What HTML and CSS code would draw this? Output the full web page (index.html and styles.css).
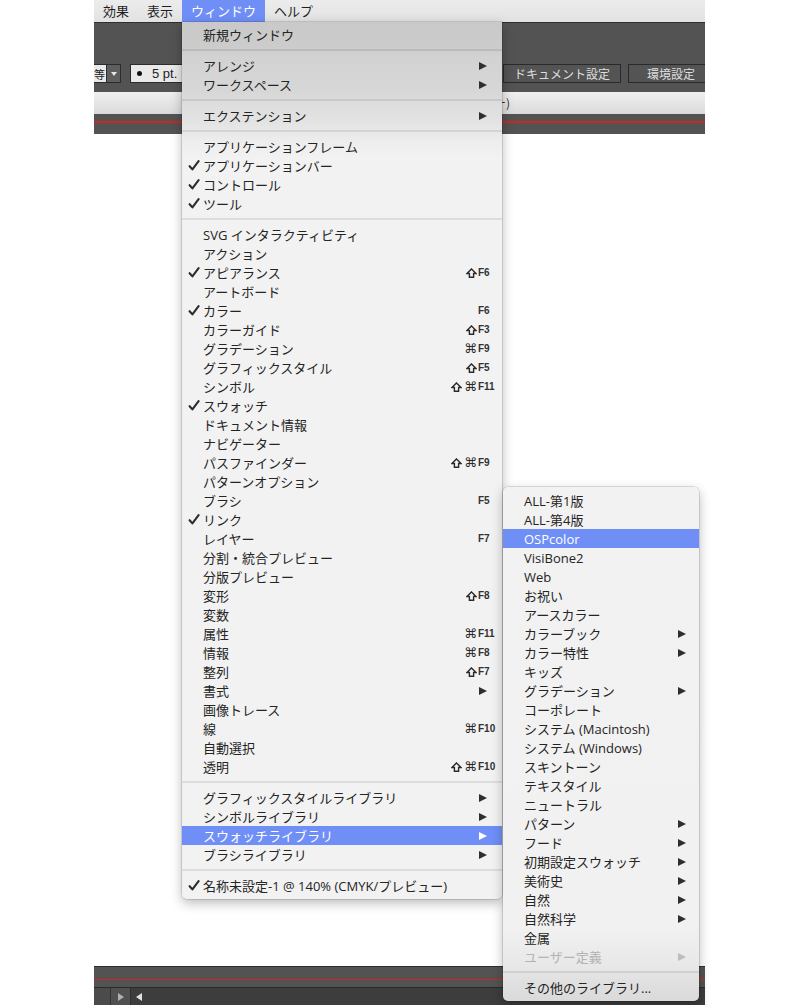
FILE: index.html
```html
<!DOCTYPE html>
<html lang="ja">
<head>
<meta charset="utf-8">
<title>ウィンドウ メニュー</title>
<link rel="stylesheet" href="styles.css">
</head>
<body>
<div class="screen">
  <div class="app">
    <div class="menubar">
      <span class="mb-item">効果</span>
      <span class="mb-item">表示</span>
      <span class="mb-item active">ウィンドウ</span>
      <span class="mb-item">ヘルプ</span>
    </div>
    <div class="toolbar">
      <div class="tb-top"></div>
      <div class="tb-controls">
        <div class="ctl-left">
          <div class="field cut"><span class="cut-txt">等</span></div>
          <div class="dd-btn"><i class="dd-tri"></i></div>
          <div class="field stroke"><span class="dot"></span><span class="pt">5 pt.</span></div>
        </div>
        <div class="ctl-right">
          <div class="btn b1">ドキュメント設定</div>
          <div class="btn b2">環境設定</div>
        </div>
      </div>
      <div class="tabbar"><span class="tab-tail">ュー)</span></div>
      <div class="tb-bottom"><div class="redline"></div></div>
    </div>
    <div class="canvas"></div>
    <div class="statusbar">
      <div class="sb-top"><div class="redline thin"></div></div>
      <div class="scrollrow">
        <div class="sr-box"></div>
        <div class="sr-btn"><i class="tri-r"></i></div>
        <div class="sr-track"><i class="tri-l"></i></div>
      </div>
    </div>
  </div>

  <div class="menu main-menu">
    <div class="item">新規ウィンドウ</div>
    <div class="sep"></div>
    <div class="item">アレンジ<i class="arr"></i></div>
    <div class="item">ワークスペース<i class="arr"></i></div>
    <div class="sep"></div>
    <div class="item">エクステンション<i class="arr"></i></div>
    <div class="sep"></div>
    <div class="item">アプリケーションフレーム</div>
    <div class="item"><svg class="ck" viewBox="0 0 12 11"><path d="M1.6 6.2 L4.4 9.4 L10.6 1.2"/></svg>アプリケーションバー</div>
    <div class="item"><svg class="ck" viewBox="0 0 12 11"><path d="M1.6 6.2 L4.4 9.4 L10.6 1.2"/></svg>コントロール</div>
    <div class="item"><svg class="ck" viewBox="0 0 12 11"><path d="M1.6 6.2 L4.4 9.4 L10.6 1.2"/></svg>ツール</div>
    <div class="sep"></div>
    <div class="item">SVG インタラクティビティ</div>
    <div class="item">アクション</div>
    <div class="item"><svg class="ck" viewBox="0 0 12 11"><path d="M1.6 6.2 L4.4 9.4 L10.6 1.2"/></svg>アピアランス<span class="sc"><span class="mods"><svg class="shift" viewBox="0 0 11 10"><path d="M5.5 0.9 L10.1 5.5 L7.6 5.5 L7.6 9.3 L3.4 9.3 L3.4 5.5 L0.9 5.5 Z"/></svg></span><span class="key">F6</span></span></div>
    <div class="item">アートボード</div>
    <div class="item"><svg class="ck" viewBox="0 0 12 11"><path d="M1.6 6.2 L4.4 9.4 L10.6 1.2"/></svg>カラー<span class="sc"><span class="mods"></span><span class="key">F6</span></span></div>
    <div class="item">カラーガイド<span class="sc"><span class="mods"><svg class="shift" viewBox="0 0 11 10"><path d="M5.5 0.9 L10.1 5.5 L7.6 5.5 L7.6 9.3 L3.4 9.3 L3.4 5.5 L0.9 5.5 Z"/></svg></span><span class="key">F3</span></span></div>
    <div class="item">グラデーション<span class="sc"><span class="mods"><span class="cmd">⌘</span></span><span class="key">F9</span></span></div>
    <div class="item">グラフィックスタイル<span class="sc"><span class="mods"><svg class="shift" viewBox="0 0 11 10"><path d="M5.5 0.9 L10.1 5.5 L7.6 5.5 L7.6 9.3 L3.4 9.3 L3.4 5.5 L0.9 5.5 Z"/></svg></span><span class="key">F5</span></span></div>
    <div class="item">シンボル<span class="sc"><span class="mods"><svg class="shift" viewBox="0 0 11 10"><path d="M5.5 0.9 L10.1 5.5 L7.6 5.5 L7.6 9.3 L3.4 9.3 L3.4 5.5 L0.9 5.5 Z"/></svg><span class="cmd">⌘</span></span><span class="key">F11</span></span></div>
    <div class="item"><svg class="ck" viewBox="0 0 12 11"><path d="M1.6 6.2 L4.4 9.4 L10.6 1.2"/></svg>スウォッチ</div>
    <div class="item">ドキュメント情報</div>
    <div class="item">ナビゲーター</div>
    <div class="item">パスファインダー<span class="sc"><span class="mods"><svg class="shift" viewBox="0 0 11 10"><path d="M5.5 0.9 L10.1 5.5 L7.6 5.5 L7.6 9.3 L3.4 9.3 L3.4 5.5 L0.9 5.5 Z"/></svg><span class="cmd">⌘</span></span><span class="key">F9</span></span></div>
    <div class="item">パターンオプション</div>
    <div class="item">ブラシ<span class="sc"><span class="mods"></span><span class="key">F5</span></span></div>
    <div class="item"><svg class="ck" viewBox="0 0 12 11"><path d="M1.6 6.2 L4.4 9.4 L10.6 1.2"/></svg>リンク</div>
    <div class="item">レイヤー<span class="sc"><span class="mods"></span><span class="key">F7</span></span></div>
    <div class="item">分割・統合プレビュー</div>
    <div class="item">分版プレビュー</div>
    <div class="item">変形<span class="sc"><span class="mods"><svg class="shift" viewBox="0 0 11 10"><path d="M5.5 0.9 L10.1 5.5 L7.6 5.5 L7.6 9.3 L3.4 9.3 L3.4 5.5 L0.9 5.5 Z"/></svg></span><span class="key">F8</span></span></div>
    <div class="item">変数</div>
    <div class="item">属性<span class="sc"><span class="mods"><span class="cmd">⌘</span></span><span class="key">F11</span></span></div>
    <div class="item">情報<span class="sc"><span class="mods"><span class="cmd">⌘</span></span><span class="key">F8</span></span></div>
    <div class="item">整列<span class="sc"><span class="mods"><svg class="shift" viewBox="0 0 11 10"><path d="M5.5 0.9 L10.1 5.5 L7.6 5.5 L7.6 9.3 L3.4 9.3 L3.4 5.5 L0.9 5.5 Z"/></svg></span><span class="key">F7</span></span></div>
    <div class="item">書式<i class="arr"></i></div>
    <div class="item">画像トレース</div>
    <div class="item">線<span class="sc"><span class="mods"><span class="cmd">⌘</span></span><span class="key">F10</span></span></div>
    <div class="item">自動選択</div>
    <div class="item">透明<span class="sc"><span class="mods"><svg class="shift" viewBox="0 0 11 10"><path d="M5.5 0.9 L10.1 5.5 L7.6 5.5 L7.6 9.3 L3.4 9.3 L3.4 5.5 L0.9 5.5 Z"/></svg><span class="cmd">⌘</span></span><span class="key">F10</span></span></div>
    <div class="sep"></div>
    <div class="item">グラフィックスタイルライブラリ<i class="arr"></i></div>
    <div class="item">シンボルライブラリ<i class="arr"></i></div>
    <div class="item hl">スウォッチライブラリ<i class="arr"></i></div>
    <div class="item">ブラシライブラリ<i class="arr"></i></div>
    <div class="sep"></div>
    <div class="item"><svg class="ck" viewBox="0 0 12 11"><path d="M1.6 6.2 L4.4 9.4 L10.6 1.2"/></svg>名称未設定-1 @ 140% (CMYK/プレビュー)</div>
  </div>

  <div class="menu sub-menu">
    <div class="item">ALL-第1版</div>
    <div class="item">ALL-第4版</div>
    <div class="item hl">OSPcolor</div>
    <div class="item">VisiBone2</div>
    <div class="item">Web</div>
    <div class="item">お祝い</div>
    <div class="item">アースカラー</div>
    <div class="item">カラーブック<i class="arr"></i></div>
    <div class="item">カラー特性<i class="arr"></i></div>
    <div class="item">キッズ</div>
    <div class="item">グラデーション<i class="arr"></i></div>
    <div class="item">コーポレート</div>
    <div class="item">システム (Macintosh)</div>
    <div class="item">システム (Windows)</div>
    <div class="item">スキントーン</div>
    <div class="item">テキスタイル</div>
    <div class="item">ニュートラル</div>
    <div class="item">パターン<i class="arr"></i></div>
    <div class="item">フード<i class="arr"></i></div>
    <div class="item">初期設定スウォッチ<i class="arr"></i></div>
    <div class="item">美術史<i class="arr"></i></div>
    <div class="item">自然<i class="arr"></i></div>
    <div class="item">自然科学<i class="arr"></i></div>
    <div class="item">金属</div>
    <div class="item dis">ユーザー定義<i class="arr"></i></div>
    <div class="sep"></div>
    <div class="item">その他のライブラリ...</div>
  </div>
</div>
</body>
</html>
```

FILE: styles.css
```css
* { box-sizing: border-box; }
html, body { margin: 0; padding: 0; background: #fff; }
body {
  width: 800px;
  height: 1005px;
  overflow: hidden;
  font-family: "Noto Sans CJK JP", sans-serif;
}
.screen {
  position: relative;
  width: 800px;
  height: 1005px;
  background: #fff;
}
.app {
  margin-left: 94px;
  width: 611px;
  height: 1005px;
  display: flex;
  flex-direction: column;
  overflow: hidden;
}

/* menu bar */
.menubar {
  height: 22px;
  flex: none;
  background: linear-gradient(#ececec, #e2e2e2);
  display: flex;
  font-size: 13px;
  color: #1e1e1e;
}
.mb-item { padding: 0 9px; line-height: 22px; white-space: nowrap; }
.mb-item.active { background: #6f8ff7; color: #fff; }

/* toolbar */
.toolbar {
  height: 112px;
  flex: none;
  background: #535353;
  display: flex;
  flex-direction: column;
}
.tb-top { height: 38px; flex: none; border-top: 1px solid #2f2f2f; }
.tb-controls {
  height: 32px;
  flex: none;
  display: flex;
  align-items: flex-start;
  padding-top: 4px;
}
.ctl-left { display: flex; }
.field {
  height: 19px;
  background: #e9e9e9;
  border: 1px solid #2c2c2c;
  display: flex;
  align-items: center;
  color: #222;
  flex: none;
}
.field.cut {
  width: 13px;
  border-left: none;
  justify-content: flex-end;
  font-size: 11px;
}
.cut-txt { flex: none; padding-right: 1px; }
.dd-btn {
  width: 14px;
  height: 19px;
  flex: none;
  background: #5e5e5e;
  border: 1px solid #2c2c2c;
  border-left: none;
  display: flex;
  align-items: center;
  justify-content: center;
}
.dd-tri {
  width: 0; height: 0;
  border-top: 4px solid #e6e6e6;
  border-left: 3px solid transparent;
  border-right: 3px solid transparent;
}
.field.stroke {
  margin-left: 9px;
  width: 80px;
  padding-left: 6px;
  font-family: "Liberation Sans", sans-serif;
  font-size: 13px;
}
.dot { width: 5px; height: 5px; border-radius: 50%; background: #111; flex: none; }
.pt { margin-left: 10px; }
.ctl-right {
  margin-left: auto;
  width: 202px;
  flex: none;
  display: flex;
  gap: 7px;
}
.btn {
  height: 19px;
  flex: none;
  border: 1px solid #2a2a2a;
  background: #545454;
  color: #dedede;
  font-size: 12px;
  display: flex;
  align-items: center;
  justify-content: center;
}
.btn.b1 { width: 118px; }
.btn.b2 { width: 86px; }
.tabbar {
  height: 22px;
  flex: none;
  background: linear-gradient(#f0f0f0, #dadada);
  padding-left: 388px;
  font-size: 12px;
  line-height: 22px;
  color: #333;
}
.tab-tail { white-space: nowrap; }
.tb-bottom { height: 20px; flex: none; padding-top: 7px; }
.redline { height: 2px; background: #c62a22; }
.redline.thin { height: 1px; background: #d0261e; }

.canvas { flex: 1; background: #fff; }

.statusbar { height: 39px; flex: none; background: #535353; display: flex; flex-direction: column; }
.sb-top { height: 21px; flex: none; border-top: 1px solid #2e2e2e; padding-top: 12px; }
.scrollrow {
  height: 18px;
  flex: none;
  border-top: 1px solid #2b2b2b;
  display: flex;
}
.sr-box { width: 17px; background: #4b4b4b; border-right: 1px solid #333; }
.sr-btn {
  width: 20px;
  background: #505050;
  border-right: 1px solid #2f2f2f;
  display: flex;
  align-items: center;
  justify-content: center;
}
.tri-r {
  width: 0; height: 0;
  border-left: 6px solid #b0b0b0;
  border-top: 4px solid transparent;
  border-bottom: 4px solid transparent;
}
.sr-track {
  flex: 1;
  background: #3d3d3d;
  display: flex;
  align-items: center;
  padding-left: 5px;
}
.tri-l {
  width: 0; height: 0;
  border-right: 6px solid #e2e2e2;
  border-top: 4px solid transparent;
  border-bottom: 4px solid transparent;
}

/* menus */
.menu {
  position: absolute;
  font-family: "Open Sans", "Noto Sans CJK JP", sans-serif;
  font-size: 13px;
  color: #242424;
  overflow: hidden;
  box-shadow: 0 0 0 0.5px rgba(0,0,0,0.22), 0 4px 12px rgba(0,0,0,0.28);
}
.main-menu {
  left: 182px;
  top: 22px;
  width: 320px;
  padding: 3px 0 4px;
  border-radius: 0 0 5px 5px;
  background: linear-gradient(to bottom,
    #c9c9c9 0px, #cccccc 26px, #d2d2d2 34px, #d7d7d7 70px,
    #dedede 84px, #e3e3e3 100px, #e8e8e8 110px, #eeeeee 122px,
    #f2f2f2 136px, #f2f2f2 100%);
}
.sub-menu {
  left: 503px;
  top: 487px;
  width: 196px;
  padding: 4px 0 4px;
  border-radius: 5px;
  background: linear-gradient(to bottom,
    #f2f2f2 0px, #f1f1f1 440px, #e8e8e8 478px, #e0e0e0 495px, #dadada 100%);
}
.item {
  height: 19px;
  display: flex;
  align-items: center;
  padding-left: 21px;
  white-space: nowrap;
}
.item.hl { background: #6f8ff7; color: #fff; }
.item.dis { color: #b3b3b3; }
.ck {
  width: 12px;
  height: 11px;
  margin-left: -15px;
  margin-right: 3px;
  flex: none;
}
.ck path {
  fill: none;
  stroke: #2c2c2c;
  stroke-width: 2.1;
  stroke-linecap: round;
  stroke-linejoin: round;
}
.arr {
  margin-left: auto;
  margin-right: 15px;
  width: 0; height: 0;
  flex: none;
  border-left: 8px solid #2e2e2e;
  border-top: 4.5px solid transparent;
  border-bottom: 4.5px solid transparent;
}
.sub-menu .arr { margin-right: 13px; }
.item.hl .arr { border-left-color: #fff; }
.item.dis .arr { border-left-color: #bdbdbd; }
.sep { height: 12px; display: flex; align-items: center; }
.sep::before { content: ""; display: block; width: 100%; height: 2px; background: rgba(0,0,0,0.085); }

.sc {
  margin-left: auto;
  margin-right: 7px;
  display: flex;
  align-items: center;
}
.mods {
  display: flex;
  align-items: center;
  gap: 2px;
}
.shift {
  width: 11px;
  height: 10px;
  flex: none;
}
.shift path {
  fill: none;
  stroke: #2a2a2a;
  stroke-width: 1.4;
  stroke-linejoin: miter;
}
.cmd {
  font-family: "DejaVu Sans", sans-serif;
  font-size: 13px;
  line-height: 13px;
  color: #2a2a2a;
}
.key {
  width: 17px;
  margin-left: 1px;
  font-family: "Liberation Sans", sans-serif;
  font-weight: 700;
  font-size: 10px;
  color: #333;
}
```
